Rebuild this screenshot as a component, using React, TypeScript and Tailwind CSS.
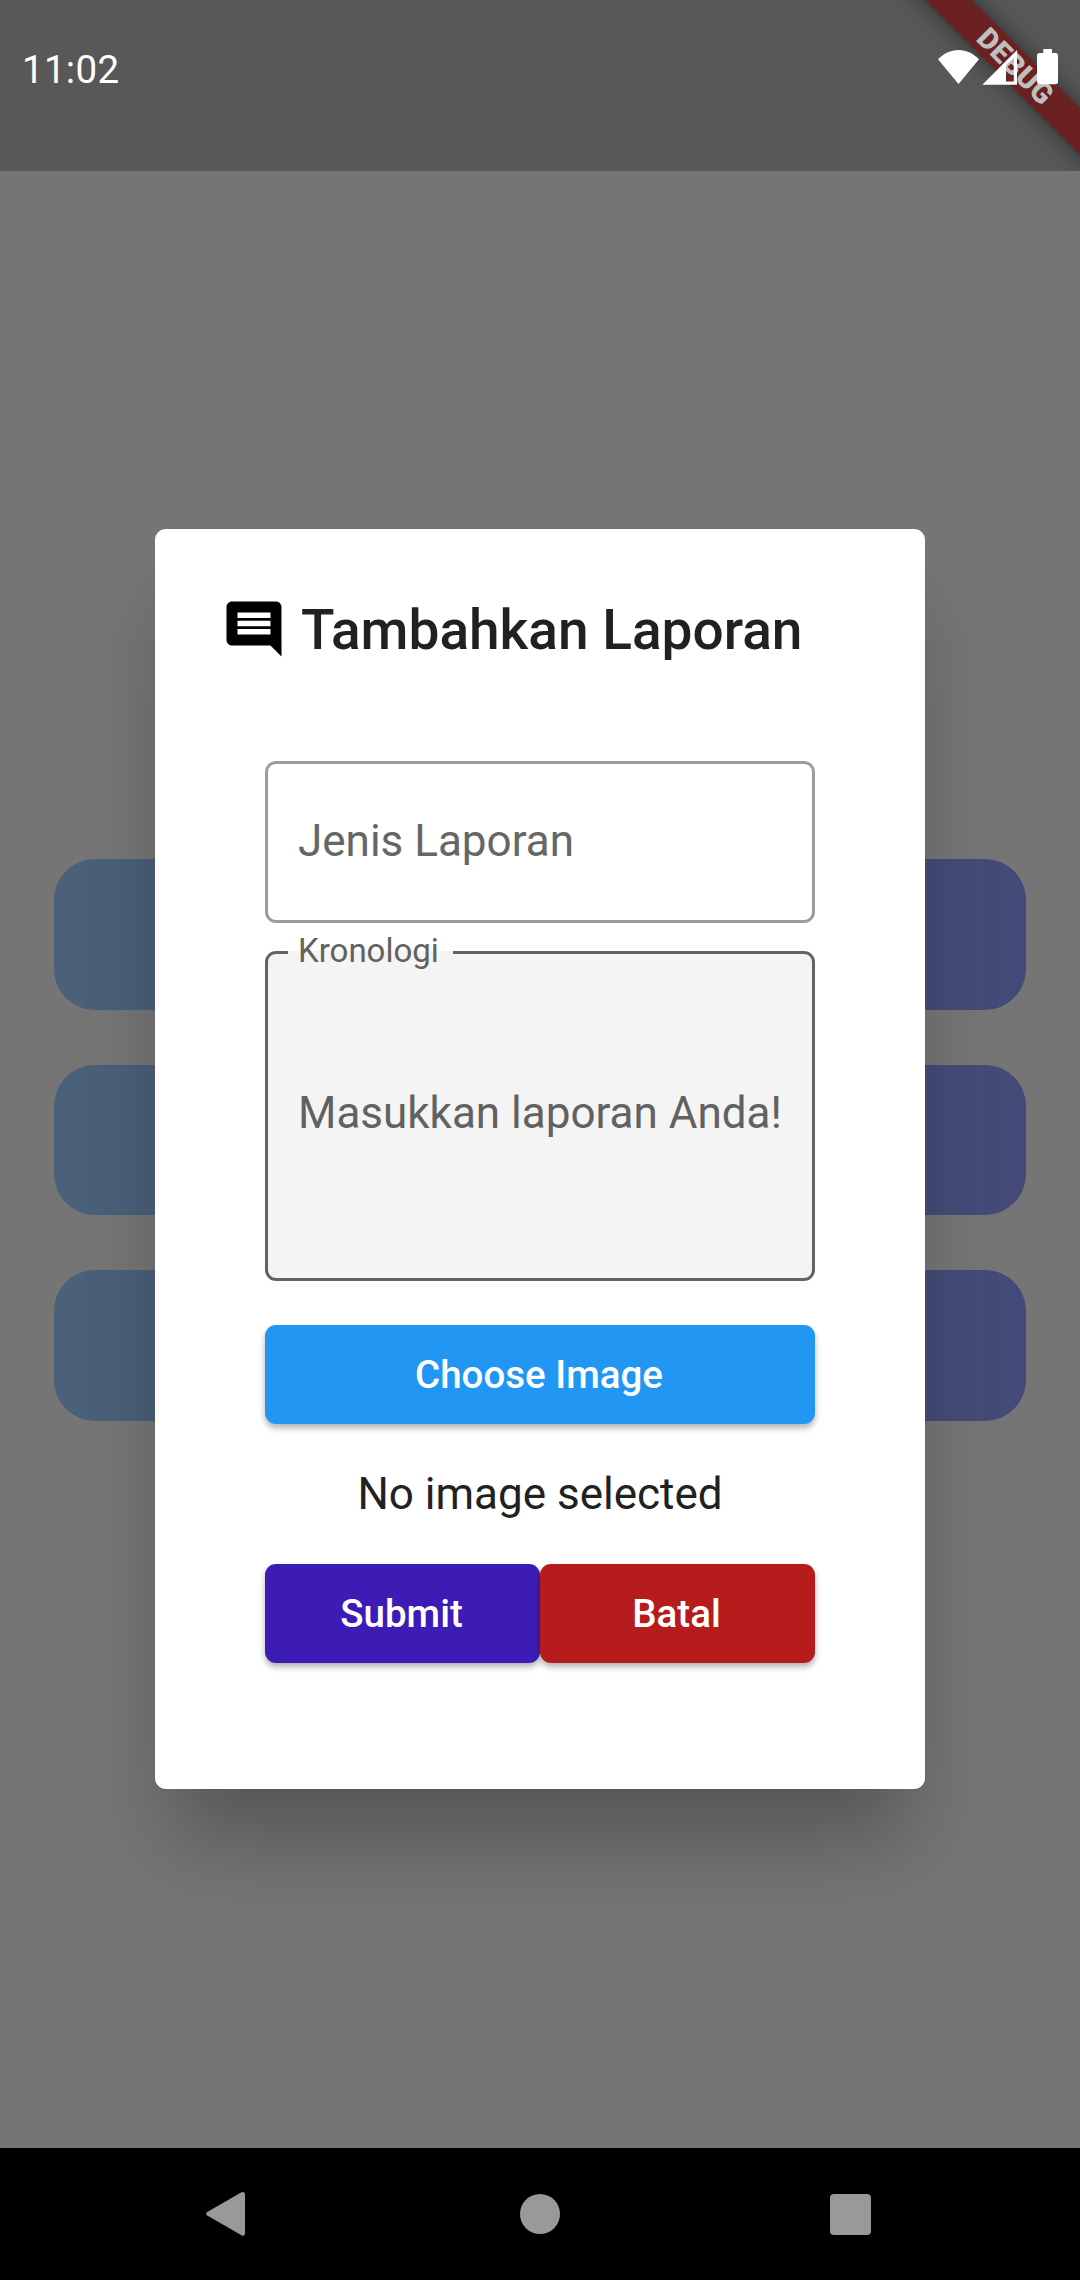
import React from "react";

const menuRows = ["first", "second", "third"];

function StatusIcons() {
  return (
    <svg className="mt-[48px] mr-[20px] h-[40px] w-[124px]" viewBox="936 48 124 40" fill="#fff">
      <path d="M958.5 84 938 59.3c5.600-5.700 12.700-9.300 20.500-9.300s14.900 3.600 20.500 9.300z" />
      <path fillRule="evenodd" d="M982.300 84.700 1017 50v34.700zM1006 65.500V81.500h7.800V58z" />
      <path d="M1043.300 49h8.700v4h3.400a2.600 2.600 0 0 1 2.600 2.600v26a2.600 2.600 0 0 1-2.600 2.600h-15.800a2.600 2.600 0 0 1-2.600-2.600v-26a2.600 2.600 0 0 1 2.600-2.600h3.700z" />
    </svg>
  );
}

function StatusBar() {
  return (
    <header className="relative h-[171px] shrink-0 bg-[#585858]">
      <div className="absolute top-0 right-0 h-[171px] w-[260px] overflow-hidden">
        <div className="absolute top-[49px] left-[44px] flex h-[33px] w-[300px] rotate-45 items-center justify-center bg-[#6b2122] pl-[3px] text-[29px] leading-none font-black tracking-[0.3px] text-[#bfbfbf] shadow-[0_0_24px_rgba(0,0,0,0.5)]">
          DEBUG
        </div>
      </div>
      <div className="relative flex items-start justify-between">
        <span className="mt-[47px] ml-[22px] text-[38.5px] leading-[46px] tracking-[0.3px] text-white">11:02</span>
        <StatusIcons />
      </div>
    </header>
  );
}

function ReportDialog() {
  return (
    <section className="h-[1260px] w-[770px] rounded-[11px] bg-white px-[66px] pt-[66.5px] text-[#212121] shadow-[0_66px_80px_-18px_rgba(0,0,0,0.27)]">
      <h1 className="flex h-[66px] items-center text-[55px] font-medium">
        <svg className="mr-[14px] size-[66px] shrink-0" viewBox="0 0 24 24" fill="#000">
          <path d="M21.99 4c0-1.1-.89-2-1.99-2H4c-1.1 0-2 .9-2 2v12c0 1.1.9 2 2 2h14l4 4-.01-18zM18 14H6v-2h12v2zm0-3H6V9h12v2zm0-3H6V6h12v2z" />
        </svg>
        <span className="pt-[4px] whitespace-nowrap">Tambahkan Laporan</span>
      </h1>
      <form className="mx-[44px] mt-[99.5px] flex flex-col">
        <div className="flex h-[162px] items-center rounded-[11px] border-[3px] border-[#9c9c9c] pb-[2px] pl-[30px] text-[44px] text-[#666]">
          Jenis Laporan
        </div>
        <div className="relative mt-[28px] flex h-[330px] items-center rounded-[11px] border-[3px] border-[#636363] bg-[#f4f4f4] pb-[7px] pl-[30px] text-[44px] text-[#616161]">
          <span className="absolute -top-[3px] left-[20px] flex h-[3px] w-[165px] items-center bg-[#f4f4f4] pl-[10px] text-[33px]">
            <span className="-mt-[3px]">Kronologi</span>
          </span>
          <span className="whitespace-nowrap">Masukkan laporan Anda!</span>
        </div>
        <button
          type="button"
          className="mt-[44px] h-[99px] rounded-[11px] bg-[#2196f3] pr-[2px] text-[38.5px] font-medium text-white shadow-[0_4px_6px_rgba(0,0,0,0.3)]"
        >
          Choose Image
        </button>
        <p className="mt-[44px] text-center text-[44px] leading-[52px]">No image selected</p>
        <div className="mt-[44px] flex text-[38.5px] font-medium text-white">
          <button type="button" className="h-[99px] flex-1 rounded-[11px] bg-[#3d1bb5] pr-[2px] shadow-[0_4px_6px_rgba(0,0,0,0.3)]">
            Submit
          </button>
          <button type="button" className="h-[99px] flex-1 rounded-[11px] bg-[#b51c1b] pr-[2px] shadow-[0_4px_6px_rgba(0,0,0,0.3)]">
            Batal
          </button>
        </div>
      </form>
    </section>
  );
}

function NavigationBar() {
  return (
    <nav className="flex h-[132px] shrink-0 items-center justify-between bg-black pr-[209px] pl-[206px]">
      <svg className="h-[46px] w-[40px]" viewBox="0 0 40 46" fill="#999">
        <path d="M1.200 21 35.500 1.200Q39 0 39 3.500V42Q39 46 35.500 44.300L1.200 24.500Q-.8 22.700 1.200 21Z" />
      </svg>
      <span className="ml-[3px] size-[40px] rounded-full bg-[#999]" />
      <span className="size-[41px] rounded-[4px] bg-[#999]" />
    </nav>
  );
}

export default function App() {
  return (
    <div className="flex h-[2280px] w-[1080px] flex-col overflow-hidden bg-[#757575] font-['Roboto',sans-serif]">
      <StatusBar />
      <main className="relative flex-1">
        <div className="flex flex-col gap-[55px] px-[54px] pt-[688px]">
          {menuRows.map((row) => (
            <div key={row} className="h-[150.5px] rounded-[41px] bg-linear-to-r from-[#4a6179] to-[#444a77]" />
          ))}
        </div>
        <div className="absolute inset-0 flex items-center justify-center pb-px">
          <ReportDialog />
        </div>
      </main>
      <NavigationBar />
    </div>
  );
}
